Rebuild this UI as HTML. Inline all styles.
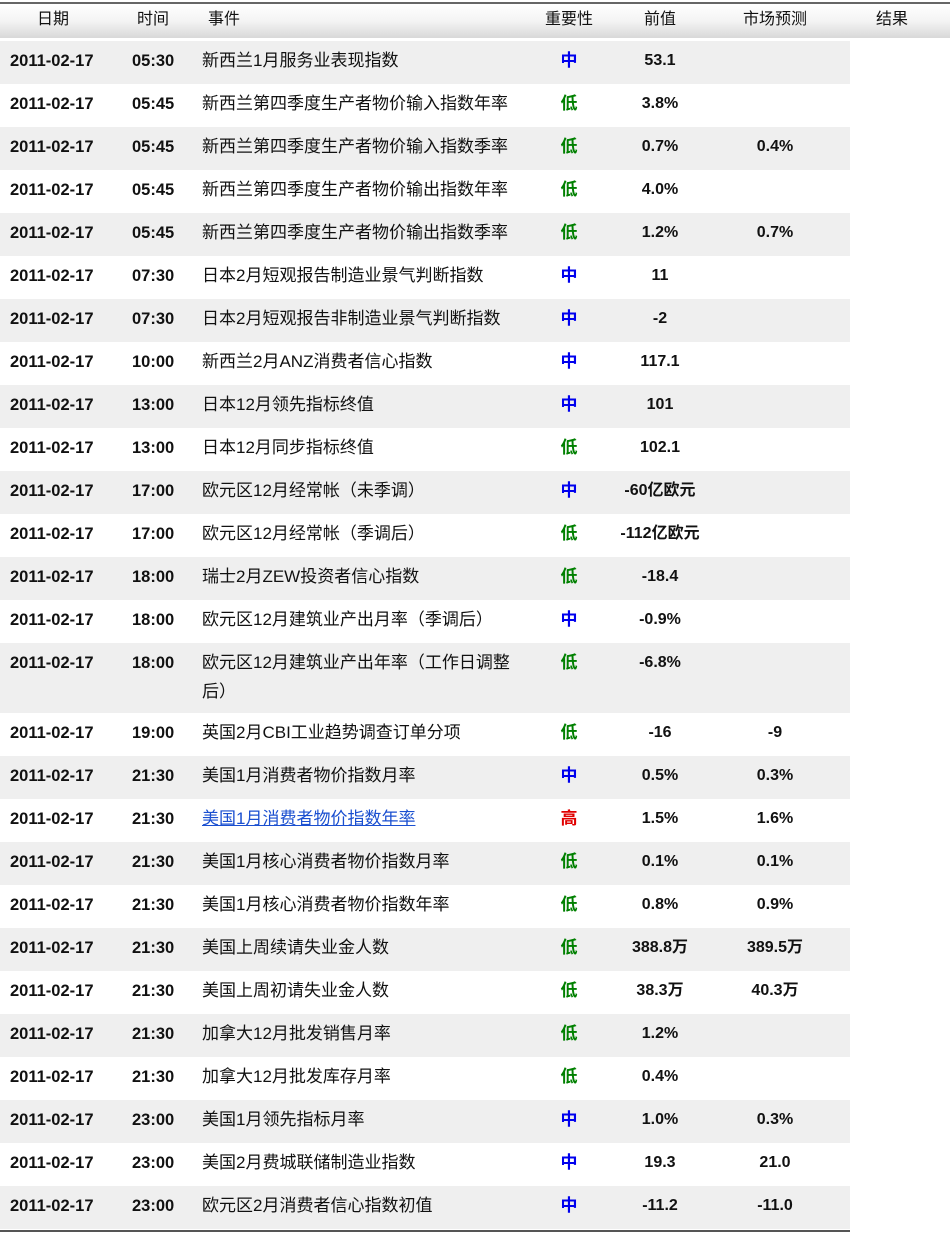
<!DOCTYPE html>
<html><head><meta charset="utf-8"><style>
body{margin:0;width:950px;height:1237px;background:#fff;font-family:"Liberation Sans","Noto Sans CJK SC",sans-serif;position:relative;overflow:hidden}
.h{position:absolute;left:0;top:2px;width:950px;height:34px;border-top:2px solid #666;background:linear-gradient(#fff,#f4f4f4 50%,#d8d8d8);font-size:16px;color:#111}
.h span,.r span{position:absolute;white-space:nowrap;line-height:20px}
.h span{top:6px !important}
.r{position:absolute;left:0;width:850px;height:43px;font-size:17px;color:#111}
.r span{top:10px}
.r span.x{top:39px}
.g{background:#efefef}
.c{transform:translateX(-50%)}
.d{left:10px;font-weight:bold;font-size:16.5px}
.t{left:132px;font-weight:bold;font-size:16.5px}
.e{left:202px}
.i{left:569px;font-weight:bold}
.p{left:660px;font-weight:bold;font-size:16px}
.f{left:775px;font-weight:bold;font-size:16px}
.m{color:#0000ee}.l{color:#008000}.hi{color:#e00000}
a{color:#1a4fd0;text-decoration:underline}
.bl{position:absolute;left:0;top:1230px;width:850px;height:2px;background:#555}
</style></head><body>
<div class="h">
<span class="c" style="left:53px">日期</span>
<span class="c" style="left:153px">时间</span>
<span style="left:208px">事件</span>
<span class="c" style="left:569px">重要性</span>
<span class="c" style="left:660px">前值</span>
<span class="c" style="left:775px">市场预测</span>
<span class="c" style="left:892px">结果</span>
</div>
<div class="r g" style="top:41px"><span class="d">2011-02-17</span><span class="t">05:30</span><span class="e">新西兰1月服务业表现指数</span><span class="i c m">中</span><span class="p c">53.1</span></div>
<div class="r" style="top:84px"><span class="d">2011-02-17</span><span class="t">05:45</span><span class="e">新西兰第四季度生产者物价输入指数年率</span><span class="i c l">低</span><span class="p c">3.8%</span></div>
<div class="r g" style="top:127px"><span class="d">2011-02-17</span><span class="t">05:45</span><span class="e">新西兰第四季度生产者物价输入指数季率</span><span class="i c l">低</span><span class="p c">0.7%</span><span class="f c">0.4%</span></div>
<div class="r" style="top:170px"><span class="d">2011-02-17</span><span class="t">05:45</span><span class="e">新西兰第四季度生产者物价输出指数年率</span><span class="i c l">低</span><span class="p c">4.0%</span></div>
<div class="r g" style="top:213px"><span class="d">2011-02-17</span><span class="t">05:45</span><span class="e">新西兰第四季度生产者物价输出指数季率</span><span class="i c l">低</span><span class="p c">1.2%</span><span class="f c">0.7%</span></div>
<div class="r" style="top:256px"><span class="d">2011-02-17</span><span class="t">07:30</span><span class="e">日本2月短观报告制造业景气判断指数</span><span class="i c m">中</span><span class="p c">11</span></div>
<div class="r g" style="top:299px"><span class="d">2011-02-17</span><span class="t">07:30</span><span class="e">日本2月短观报告非制造业景气判断指数</span><span class="i c m">中</span><span class="p c">-2</span></div>
<div class="r" style="top:342px"><span class="d">2011-02-17</span><span class="t">10:00</span><span class="e">新西兰2月ANZ消费者信心指数</span><span class="i c m">中</span><span class="p c">117.1</span></div>
<div class="r g" style="top:385px"><span class="d">2011-02-17</span><span class="t">13:00</span><span class="e">日本12月领先指标终值</span><span class="i c m">中</span><span class="p c">101</span></div>
<div class="r" style="top:428px"><span class="d">2011-02-17</span><span class="t">13:00</span><span class="e">日本12月同步指标终值</span><span class="i c l">低</span><span class="p c">102.1</span></div>
<div class="r g" style="top:471px"><span class="d">2011-02-17</span><span class="t">17:00</span><span class="e">欧元区12月经常帐（未季调）</span><span class="i c m">中</span><span class="p c">-60亿欧元</span></div>
<div class="r" style="top:514px"><span class="d">2011-02-17</span><span class="t">17:00</span><span class="e">欧元区12月经常帐（季调后）</span><span class="i c l">低</span><span class="p c">-112亿欧元</span></div>
<div class="r g" style="top:557px"><span class="d">2011-02-17</span><span class="t">18:00</span><span class="e">瑞士2月ZEW投资者信心指数</span><span class="i c l">低</span><span class="p c">-18.4</span></div>
<div class="r" style="top:600px"><span class="d">2011-02-17</span><span class="t">18:00</span><span class="e">欧元区12月建筑业产出月率（季调后）</span><span class="i c m">中</span><span class="p c">-0.9%</span></div>
<div class="r g" style="top:643px;height:70px"><span class="d">2011-02-17</span><span class="t">18:00</span><span class="e">欧元区12月建筑业产出年率（工作日调整</span><span class="e x">后）</span><span class="i c l">低</span><span class="p c">-6.8%</span></div>
<div class="r" style="top:713px"><span class="d">2011-02-17</span><span class="t">19:00</span><span class="e">英国2月CBI工业趋势调查订单分项</span><span class="i c l">低</span><span class="p c">-16</span><span class="f c">-9</span></div>
<div class="r g" style="top:756px"><span class="d">2011-02-17</span><span class="t">21:30</span><span class="e">美国1月消费者物价指数月率</span><span class="i c m">中</span><span class="p c">0.5%</span><span class="f c">0.3%</span></div>
<div class="r" style="top:799px"><span class="d">2011-02-17</span><span class="t">21:30</span><span class="e"><a>美国1月消费者物价指数年率</a></span><span class="i c hi">高</span><span class="p c">1.5%</span><span class="f c">1.6%</span></div>
<div class="r g" style="top:842px"><span class="d">2011-02-17</span><span class="t">21:30</span><span class="e">美国1月核心消费者物价指数月率</span><span class="i c l">低</span><span class="p c">0.1%</span><span class="f c">0.1%</span></div>
<div class="r" style="top:885px"><span class="d">2011-02-17</span><span class="t">21:30</span><span class="e">美国1月核心消费者物价指数年率</span><span class="i c l">低</span><span class="p c">0.8%</span><span class="f c">0.9%</span></div>
<div class="r g" style="top:928px"><span class="d">2011-02-17</span><span class="t">21:30</span><span class="e">美国上周续请失业金人数</span><span class="i c l">低</span><span class="p c">388.8万</span><span class="f c">389.5万</span></div>
<div class="r" style="top:971px"><span class="d">2011-02-17</span><span class="t">21:30</span><span class="e">美国上周初请失业金人数</span><span class="i c l">低</span><span class="p c">38.3万</span><span class="f c">40.3万</span></div>
<div class="r g" style="top:1014px"><span class="d">2011-02-17</span><span class="t">21:30</span><span class="e">加拿大12月批发销售月率</span><span class="i c l">低</span><span class="p c">1.2%</span></div>
<div class="r" style="top:1057px"><span class="d">2011-02-17</span><span class="t">21:30</span><span class="e">加拿大12月批发库存月率</span><span class="i c l">低</span><span class="p c">0.4%</span></div>
<div class="r g" style="top:1100px"><span class="d">2011-02-17</span><span class="t">23:00</span><span class="e">美国1月领先指标月率</span><span class="i c m">中</span><span class="p c">1.0%</span><span class="f c">0.3%</span></div>
<div class="r" style="top:1143px"><span class="d">2011-02-17</span><span class="t">23:00</span><span class="e">美国2月费城联储制造业指数</span><span class="i c m">中</span><span class="p c">19.3</span><span class="f c">21.0</span></div>
<div class="r g" style="top:1186px"><span class="d">2011-02-17</span><span class="t">23:00</span><span class="e">欧元区2月消费者信心指数初值</span><span class="i c m">中</span><span class="p c">-11.2</span><span class="f c">-11.0</span></div>
<div class="bl"></div>
</body></html>
